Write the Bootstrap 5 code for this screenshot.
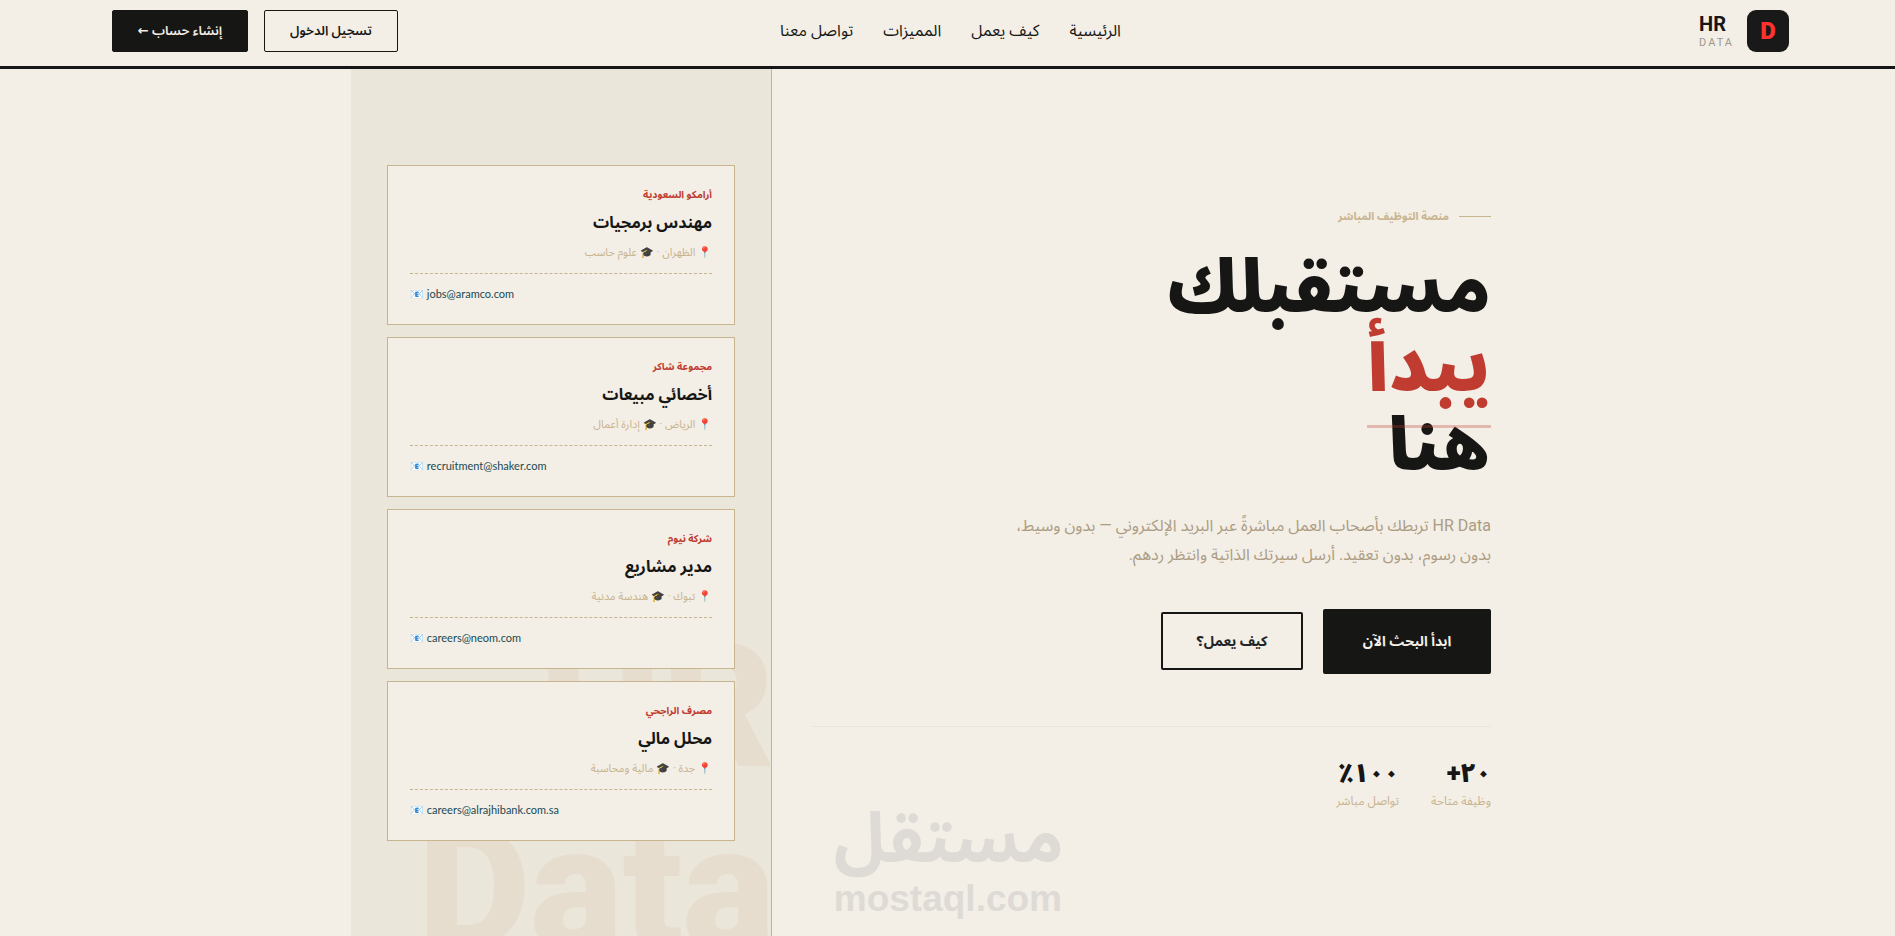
<!DOCTYPE html>
<html lang="ar" dir="rtl">
<head>
<meta charset="utf-8">
<meta name="viewport" content="width=device-width, initial-scale=1">
<title>HR Data</title>
<link href="https://cdn.jsdelivr.net/npm/bootstrap@5.3.0/dist/css/bootstrap.min.css" rel="stylesheet">
<style>
:root { --ink:#161614; --paper:#f3eee6; --sand:#c8b48e; --panel:#eae6da; --red:#c03c30; --teal:#1a4a50; }
body { background:var(--paper); color:var(--ink); font-family:Roboto,"Noto Sans Arabic","DejaVu Sans",sans-serif; min-height:100vh; }
a { text-decoration:none; color:inherit; }
.topbar { height:69px; border-bottom:3px solid #161618; padding-inline:106px 112px; padding-bottom:4px; }
.side { flex:1 1 0; }
.logo-box { width:42px; height:42px; border-radius:9px; background:#191919; color:#ff322d; font-size:24px; font-weight:900; }
.brand { gap:13px; }
.brand-name { font-size:20px; font-weight:700; line-height:24px; }
.brand-sub { font-size:11px; line-height:14px; letter-spacing:2px; color:#9c988e; }
.menu { gap:30px; font-size:16px; }
.tbtn { height:42px; min-width:134px; border-radius:2px; border:1px solid var(--ink); font-size:13px; font-weight:600; color:var(--ink); padding:0 16px; }
.solid, .solid:hover { background:var(--ink); color:var(--paper); }
.tbtn.solid { min-width:136px; }
.hero { max-width:1193px; min-height:calc(100vh - 69px); }
.pitch { padding-inline:53px 40px; padding-top:12px; }
.eyebrow { font-size:11px; font-weight:700; color:var(--sand); gap:10px; line-height:20px; }
.rule { width:32px; height:1px; background:var(--sand); }
.headline { font-size:72px; font-weight:900; line-height:79px; margin:21px 0 26px; }
.hot { color:var(--red); position:relative; display:inline-block; }
.hot::after { content:""; position:absolute; inset-inline:0; bottom:-22px; height:3px; background:var(--red); opacity:.3; }
.lede { font-size:16px; line-height:29px; color:#ac9c82; max-width:490px; margin-bottom:40px; }
.cta { gap:20px; margin-bottom:52px; }
.cta-main, .cta-alt { border-radius:2px; font-weight:700; font-size:14px; }
.cta-main { width:168px; height:65px; }
.cta-alt { width:142px; height:58px; border:2px solid var(--ink); }
.stats { border-top:1px solid #eae6da; gap:32px; padding-top:28px; }
.num { font-size:26px; font-weight:900; line-height:36px; }
.cap { font-size:12px; line-height:20px; color:var(--sand); }
.jobs { flex:0 0 421px; background:var(--panel); border-right:1px solid var(--sand); padding:0 36px; position:relative; overflow:hidden; gap:12px; }
.ghost { position:absolute; right:-4px; bottom:-44px; font-weight:900; font-size:174px; line-height:182px; color:#e7ddcf; }
.job { height:160px; background:var(--paper); border:1px solid var(--sand); padding:18px 22px; position:relative; }
.firm { font-size:10px; font-weight:700; line-height:22px; color:var(--red); }
.role { font-size:16px; font-weight:700; line-height:34px; margin:0; }
.meta { font-size:11px; line-height:26px; color:var(--sand); margin-bottom:7px; }
.mail { border-top:1px dashed var(--sand); font-family:Lato,sans-serif; font-size:11px; line-height:16px; padding-top:12px; color:var(--teal); display:block; }
.stamp { position:absolute; left:44%; top:802px; width:228px; color:#dedbd6; }
.stamp-ar { font-family:"Noto Sans Arabic",sans-serif; font-weight:700; font-size:69px; line-height:76px; }
.stamp-en { font-family:"Liberation Sans",sans-serif; font-weight:700; font-size:37px; line-height:42px; }
</style>
</head>
<body>
<header class="topbar d-flex align-items-center">
  <div class="side d-flex"><a href="#" class="brand d-flex align-items-center">
    <span class="logo-box d-flex align-items-center justify-content-center">D</span>
    <span class="d-flex flex-column" dir="ltr"><span class="brand-name">HR</span><span class="brand-sub">DATA</span></span>
  </a></div>
  <nav class="menu d-flex"><a href="#">الرئيسية</a><a href="#">كيف يعمل</a><a href="#">المميزات</a><a href="#">تواصل معنا</a></nav>
  <div class="side d-flex justify-content-end gap-3">
    <button type="button" class="btn tbtn">تسجيل الدخول</button>
    <button type="button" class="btn tbtn solid">إنشاء حساب ←</button>
  </div>
</header>
<main class="hero d-flex mx-auto">
  <section class="pitch flex-fill d-flex flex-column justify-content-center">
    <div class="eyebrow d-flex align-items-center"><span class="rule"></span>منصة التوظيف المباشر</div>
    <h1 class="headline">مستقبلك<br><span class="hot">يبدأ</span><br>هنا</h1>
    <p class="lede">HR Data تربطك بأصحاب العمل مباشرةً عبر البريد الإلكتروني — بدون وسيط، بدون رسوم، بدون تعقيد. أرسل سيرتك الذاتية وانتظر ردهم.</p>
    <div class="cta d-flex align-items-center">
      <button type="button" class="btn cta-main solid">ابدأ البحث الآن</button>
      <button type="button" class="btn cta-alt">كيف يعمل؟</button>
    </div>
    <div class="stats d-flex">
      <div><div class="num">٢٠+</div><div class="cap">وظيفة متاحة</div></div>
      <div><div class="num">١٠٠٪</div><div class="cap">تواصل مباشر</div></div>
    </div>
  </section>
  <aside class="jobs d-flex flex-column justify-content-center">
    <div class="ghost" dir="ltr" aria-hidden="true"><div class="text-end">HR</div><div>Data</div></div>
    <article class="job"><div class="firm">أرامكو السعودية</div><h2 class="role">مهندس برمجيات</h2><div class="meta">📍 الظهران · 🎓 علوم حاسب</div><a class="mail" dir="ltr" href="#">📧 jobs@aramco.com</a></article>
    <article class="job"><div class="firm">مجموعة شاكر</div><h2 class="role">أخصائي مبيعات</h2><div class="meta">📍 الرياض · 🎓 إدارة أعمال</div><a class="mail" dir="ltr" href="#">📧 recruitment@shaker.com</a></article>
    <article class="job"><div class="firm">شركة نيوم</div><h2 class="role">مدير مشاريع</h2><div class="meta">📍 تبوك · 🎓 هندسة مدنية</div><a class="mail" dir="ltr" href="#">📧 careers@neom.com</a></article>
    <article class="job"><div class="firm">مصرف الراجحي</div><h2 class="role">محلل مالي</h2><div class="meta">📍 جدة · 🎓 مالية ومحاسبة</div><a class="mail" dir="ltr" href="#">📧 careers@alrajhibank.com.sa</a></article>
  </aside>
</main>
<div class="stamp text-center" dir="ltr"><div class="stamp-ar">مستقل</div><div class="stamp-en">mostaql.com</div></div>
</body>
</html>
